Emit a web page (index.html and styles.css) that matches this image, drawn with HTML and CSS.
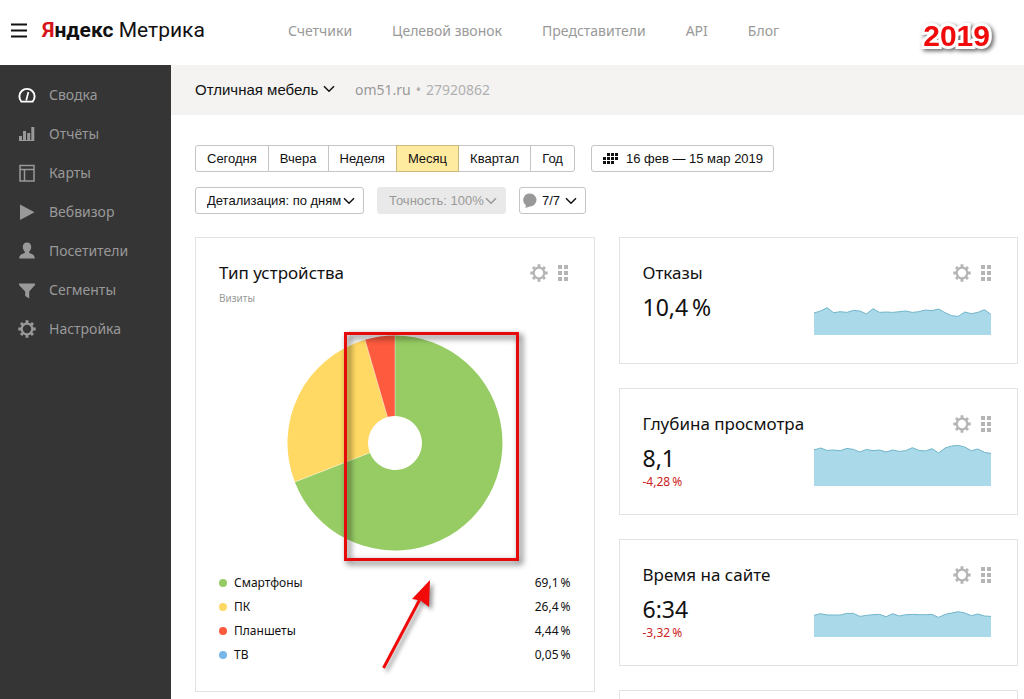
FILE: index.html
```html
<!DOCTYPE html>
<html lang="ru">
<head>
<meta charset="utf-8">
<title>Яндекс Метрика</title>
<link rel="stylesheet" href="styles.css">
</head>
<body>
<svg class="sprite" aria-hidden="true">
  <symbol id="gear" viewBox="0 0 18 18">
    <circle cx="9" cy="9" r="5.300" fill="none" stroke="currentColor" stroke-width="2.200"/>
    <path d="M9 .3v3.400M9 14.300v3.400M.3 9h3.400M14.300 9h3.400M3 3l2.200 2.200M12.800 12.800l2.200 2.200M3 15l2.200-2.200M12.800 5.200l2.200-2.200" stroke="currentColor" stroke-width="2.900" fill="none"/>
  </symbol>
  <symbol id="grip" viewBox="0 0 10 16">
    <path d="M0 0h4v4H0zM6 0h4v4H6zM0 6h4v4H0zM6 6h4v4H6zM0 12h4v4H0zM6 12h4v4H6z" fill="currentColor"/>
  </symbol>
  <symbol id="chevron" viewBox="0 0 12 8">
    <path d="M1 1.2l5 5 5-5" fill="none" stroke="currentColor" stroke-width="1.5"/>
  </symbol>
</svg>
<div class="page">
  <header class="header">
    <button class="burger" type="button" aria-label="Меню">
      <svg width="16" height="15" viewBox="0 0 16 15"><path d="M0 1.5h16M0 7.5h16M0 13.5h16" stroke="#111" stroke-width="1.8"/></svg>
    </button>
    <a class="logo" href="#"><b><span class="logo-ya">Я</span>ндекс</b> Метрика</a>
    <nav class="nav">
      <a href="#">Счетчики</a>
      <a href="#">Целевой звонок</a>
      <a href="#">Представители</a>
      <a href="#">API</a>
      <a href="#">Блог</a>
    </nav>
    <span class="year">2019</span>
  </header>
  <div class="layout">
    <nav class="sidebar">
      <a class="side-link active" href="#"><svg viewBox="0 0 18 18"><path d="M3.4 15.6A7.6 7.6 0 1 1 14.6 15.6Z" fill="none" stroke="currentColor" stroke-width="1.9" stroke-linejoin="round"/><path d="M8.2 14.5L10.4 6" stroke="currentColor" stroke-width="1.7"/></svg>Сводка</a>
      <a class="side-link" href="#"><svg viewBox="0 0 18 18"><path d="M1 11h3v5H1zM5 6h3v10H5zM9.200 8h3v8h-3zM13.300 2h3v14h-3zM1 15h15v1H1z" fill="currentColor"/></svg>Отчёты</a>
      <a class="side-link" href="#"><svg viewBox="0 0 18 18"><path d="M2 1.500h14v15.500H2zM2 5.500h14M6.500 5.500V17" fill="none" stroke="currentColor" stroke-width="1.500"/></svg>Карты</a>
      <a class="side-link" href="#"><svg viewBox="0 0 18 18"><path d="M2 1.500v15.500L16.500 9.200z" fill="currentColor"/></svg>Вебвизор</a>
      <a class="side-link" href="#"><svg viewBox="0 0 18 18"><path d="M9 .5c2.800 0 4.200 2 4.200 4.400 0 1.800-.8 3.600-2 4.600v1.600c2.400.8 5.600 1.400 5.600 5.400H1.200c0-4 3.200-4.600 5.600-5.400V9.500c-1.200-1-2-2.800-2-4.600C4.800 2.500 6.200.5 9 .5z" fill="currentColor"/></svg>Посетители</a>
      <a class="side-link" href="#"><svg viewBox="0 0 18 18"><path d="M1 2.500h16v1.500l-5.800 6.500V17.500l-4-2.500v-4.500L1 4z" fill="currentColor"/></svg>Сегменты</a>
      <a class="side-link" href="#"><svg viewBox="0 0 18 18"><use href="#gear"/></svg>Настройка</a>
    </nav>
    <main class="main">
      <div class="counter">
        <label class="picker picker-plain">
          <select aria-label="Счетчик"><option>Отличная мебель</option></select>
          <svg class="chevron"><use href="#chevron"/></svg>
        </label>
        <div class="counter-info"><a href="#">om51.ru</a><span>•</span><span>27920862</span></div>
      </div>
      <div class="filters">
        <div class="filter-row">
          <div class="period">
            <button type="button">Сегодня</button>
            <button type="button">Вчера</button>
            <button type="button">Неделя</button>
            <button type="button" class="selected">Месяц</button>
            <button type="button">Квартал</button>
            <button type="button">Год</button>
          </div>
          <button class="box-button dates" type="button">
            <svg width="15" height="11" viewBox="0 0 15 11"><path d="M4 0h3v3H4zM8 0h3v3H8zM12 0h3v3h-3zM0 4h3v3H0zM4 4h3v3H4zM8 4h3v3H8zM12 4h3v3h-3zM0 8h3v3H0zM4 8h3v3H4zM8 8h3v3H8z" fill="#111"/></svg>
            16 фев — 15 мар 2019
          </button>
        </div>
        <div class="filter-row">
          <label class="picker picker-box">
            <select aria-label="Детализация"><option>Детализация: по дням</option></select>
            <svg class="chevron"><use href="#chevron"/></svg>
          </label>
          <label class="picker picker-box picker-off">
            <select aria-label="Точность" disabled><option>Точность: 100%</option></select>
            <svg class="chevron"><use href="#chevron"/></svg>
          </label>
          <button class="box-button notes" type="button">
            <svg width="14" height="15" viewBox="0 0 14 15"><path d="M7 .5a6.500 6.500 0 1 1 0 13c-1.200 0-2.600 1.300-5 1.300.8-.8 1-1.600.6-2.800A6.500 6.500 0 0 1 7 .5z" fill="#999"/></svg>
            7/7
            <svg class="chevron"><use href="#chevron"/></svg>
          </button>
        </div>
      </div>
      <div class="widgets">
        <section class="card">
          <div class="card-head">
            <h2>Тип устройства</h2>
            <button type="button" aria-label="Настроить"><svg class="gear"><use href="#gear"/></svg></button>
            <button type="button" aria-label="Переместить"><svg class="grip"><use href="#grip"/></svg></button>
          </div>
          <p class="subtitle">Визиты</p>
          <div class="pie">
            <svg class="pie-chart" viewBox="-108 -108 216 216">
              <path d="M0-107.500A107.500 107.500 0 1 1-100.200 39L-25.200 9.800A27 27 0 1 0 0-27z" fill="#97cc64"/>
              <path d="M-100.200 39A107.500 107.500 0 0 1-30-103.200L-7.500-25.900A27 27 0 0 0-25.200 9.800z" fill="#ffd963"/>
              <path d="M-30-103.200A107.500 107.500 0 0 1 0-107.500V-27A27 27 0 0 0-7.500-25.900z" fill="#fd5a3e"/>
              <path d="M0-107.500V-27M-100.200 39L-25.200 9.800M-30-103.200L-7.500-25.900" stroke="#fff" stroke-opacity=".5" stroke-width=".8"/>
            </svg>
            <div class="marker"></div>
            <svg class="arrow" viewBox="0 0 56 96"><path d="M2.500 90L38.500 22" stroke="#f00a0a" stroke-width="3"/><path d="M49 2L48 29 39.500 22.500 31 21z" fill="#f00a0a"/></svg>
          </div>
          <table class="legend">
            <tr><th scope="row"><i class="dot green"></i>Смартфоны</th><td>69,1&thinsp;%</td></tr>
            <tr><th scope="row"><i class="dot yellow"></i>ПК</th><td>26,4&thinsp;%</td></tr>
            <tr><th scope="row"><i class="dot red"></i>Планшеты</th><td>4,44&thinsp;%</td></tr>
            <tr><th scope="row"><i class="dot blue"></i>ТВ</th><td>0,05&thinsp;%</td></tr>
          </table>
        </section>
        <div class="column">
          <section class="card stat">
            <div class="card-head">
              <h2>Отказы</h2>
              <button type="button" aria-label="Настроить"><svg class="gear"><use href="#gear"/></svg></button>
              <button type="button" aria-label="Переместить"><svg class="grip"><use href="#grip"/></svg></button>
            </div>
            <div class="stat-body">
              <div><p class="value">10,4&thinsp;%</p></div>
              <svg class="spark" viewBox="0 0 27 44" preserveAspectRatio="none">
                <path class="area" d="M0 44V22L1 20 2 16.700 3 21.700 4 20.700 5 21.400 6 19.400 7 20 8 23 9 17.700 10 21.400 11 21 12 21.400 13 20.700 14 20 15 21.400 16 20.700 17 19 18 19.700 19 18 20 21.700 21 24.700 22 25.400 23 21 24 22.700 25 21.400 26 18.700 27 23.400V44z"/>
                <polyline class="line" points="0,22 1,20 2,16.7 3,21.7 4,20.7 5,21.4 6,19.4 7,20 8,23 9,17.7 10,21.4 11,21 12,21.4 13,20.7 14,20 15,21.4 16,20.7 17,19 18,19.7 19,18 20,21.7 21,24.7 22,25.4 23,21 24,22.7 25,21.4 26,18.7 27,23.4"/>
              </svg>
            </div>
          </section>
          <section class="card stat">
            <div class="card-head">
              <h2>Глубина просмотра</h2>
              <button type="button" aria-label="Настроить"><svg class="gear"><use href="#gear"/></svg></button>
              <button type="button" aria-label="Переместить"><svg class="grip"><use href="#grip"/></svg></button>
            </div>
            <div class="stat-body">
              <div><p class="value">8,1</p><p class="delta">-4,28&thinsp;%</p></div>
              <svg class="spark" viewBox="0 0 27 44" preserveAspectRatio="none">
                <path class="area" d="M0 44V8L1 6 2 8.400 3 8 4 8.700 5 6.400 6 7.400 7 10 8 7.400 9 8.700 10 8 11 10 12 8 13 9.400 14 8.700 15 5.700 16 8.400 17 9 18 6.700 19 11 20 6 21 4 22 3.400 23 5 24 8.700 25 7 26 10.400 27 11.400V44z"/>
                <polyline class="line" points="0,8 1,6 2,8.4 3,8 4,8.7 5,6.4 6,7.4 7,10 8,7.4 9,8.7 10,8 11,10 12,8 13,9.4 14,8.7 15,5.7 16,8.4 17,9 18,6.7 19,11 20,6 21,4 22,3.4 23,5 24,8.7 25,7 26,10.4 27,11.4"/>
              </svg>
            </div>
          </section>
          <section class="card stat">
            <div class="card-head">
              <h2>Время на сайте</h2>
              <button type="button" aria-label="Настроить"><svg class="gear"><use href="#gear"/></svg></button>
              <button type="button" aria-label="Переместить"><svg class="grip"><use href="#grip"/></svg></button>
            </div>
            <div class="stat-body">
              <div><p class="value">6:34</p><p class="delta">-3,32&thinsp;%</p></div>
              <svg class="spark" viewBox="0 0 27 44" preserveAspectRatio="none">
                <path class="area" d="M0 44V22.400L1 20.700 2 22 3 22 4 22 5 20.400 6 20.400 7 23.400 8 22.400 9 21.700 10 21.400 11 23.700 12 20.700 13 23 14 21.700 15 21.400 16 21.700 17 21.700 18 21.400 19 24.400 20 21.400 21 20 22 18.700 23 20 24 22.700 25 21 26 23 27 23.400V44z"/>
                <polyline class="line" points="0,22.4 1,20.7 2,22 3,22 4,22 5,20.4 6,20.4 7,23.4 8,22.4 9,21.7 10,21.4 11,23.7 12,20.7 13,23 14,21.7 15,21.4 16,21.7 17,21.7 18,21.4 19,24.4 20,21.4 21,20 22,18.7 23,20 24,22.7 25,21 26,23 27,23.4"/>
              </svg>
            </div>
          </section>
          <section class="card stat"></section>
        </div>
      </div>
    </main>
  </div>
</div>
</body>
</html>
```

FILE: styles.css
```css
* { box-sizing: border-box; }

body {
  margin: 0;
  background: #fff;
  color: #111;
  font-family: "Noto Sans", "Open Sans", sans-serif;
  font-size: 15px;
}

h2, p { margin: 0; font-weight: 400; }
a { color: inherit; text-decoration: none; }
svg { display: block; flex: none; }
button, select { font: inherit; color: inherit; margin: 0; }
.sprite { position: absolute; width: 0; height: 0; }

.page {
  display: flex;
  flex-direction: column;
  height: 100vh;
  overflow: hidden;
}

/* Header */
.header {
  flex: none;
  display: flex;
  align-items: center;
  height: 65px;
  padding: 0 34px 5px 11px;
}
.burger { padding: 0; border: 0; background: none; }
.logo {
  flex: none;
  width: 232px;
  margin-left: 15px;
  font-family: Roboto, "Open Sans", sans-serif;
  font-size: 21px;
  line-height: 40px;
  white-space: nowrap;
}
.logo-ya { color: #d6151b; }
.nav {
  display: flex;
  gap: 40px;
  margin-left: 14px;
  color: #999;
  font-size: 14px;
  white-space: nowrap;
}
.year {
  margin-left: auto;
  padding-top: 12px;
  color: #f00a0a;
  font: bold 30px "Liberation Sans", Arial, sans-serif;
  -webkit-text-stroke: 6px #fff;
  paint-order: stroke fill;
  filter: drop-shadow(2px 2px 2px rgba(0, 0, 0, .6));
}

.layout { flex: 1; display: flex; min-height: 0; }

/* Sidebar */
.sidebar {
  flex: none;
  width: 171px;
  padding-top: 10px;
  background: #353535;
  color: #999;
}
.side-link {
  display: flex;
  align-items: center;
  gap: 13px;
  height: 39px;
  padding-left: 18px;
  font-size: 14px;
}
.side-link svg { width: 18px; height: 18px; }
.side-link.active svg { color: #fff; }

/* Counter bar */
.main { flex: 1; min-width: 0; overflow: hidden; }
.counter {
  display: flex;
  align-items: center;
  gap: 20px;
  height: 50px;
  padding: 0 24px 2px;
  background: #f4f3f2;
}
.counter-info { display: flex; gap: 5px; color: #b0b0b0; font-size: 14px; }
.counter-info a { color: #999; }

.picker { position: relative; display: flex; align-items: center; }
.picker select {
  appearance: none;
  border: 0;
  padding: 0;
  background: none;
  opacity: 1;
}
.chevron { width: 12px; height: 8px; }
.picker .chevron { position: absolute; right: 0; pointer-events: none; }
.picker-plain { font: 15px "Liberation Sans", Arial, sans-serif; }
.picker-plain select { padding-right: 16px; }

/* Filters */
.filters {
  display: flex;
  flex-direction: column;
  gap: 15px;
  padding: 30px 24px 23px;
  font: 13px "Liberation Sans", Arial, sans-serif;
}
.filter-row { display: flex; gap: 13px; }
.period { display: flex; margin-right: 3px; }
.period button {
  height: 27px;
  padding: 0 11px;
  border: 1px solid #c4c4c4;
  background: #fff;
}
.period button + button { margin-left: -1px; }
.period button:first-child { border-radius: 3px 0 0 3px; }
.period button:last-child { border-radius: 0 3px 3px 0; }
.period .selected { position: relative; background: #ffeba0; border-color: #c9b97c; }
.box-button {
  display: flex;
  align-items: center;
  height: 27px;
  border: 1px solid #c4c4c4;
  border-radius: 3px;
  background: #fff;
}
.dates { gap: 8px; padding: 0 10px 0 11px; }
.notes { gap: 5px; padding: 0 8px 0 3px; }
.picker-box {
  height: 27px;
  border: 1px solid #c4c4c4;
  border-radius: 3px;
}
.picker-box select { height: 25px; padding: 0 21px 0 11px; }
.picker-box .chevron { right: 8px; }
.picker-off { background: #e9e9e9; border-color: #e9e9e9; color: #999; }

/* Widgets */
.widgets {
  display: grid;
  grid-template-columns: 1fr 1fr;
  gap: 24px;
  align-items: start;
  padding: 0 6px 0 24px;
}
.column { display: grid; gap: 24px; }
.card {
  padding: 23px 23px 25px;
  border: 1px solid #e3e3e3;
}
.card-head {
  display: flex;
  align-items: center;
  gap: 10px;
  height: 24px;
  padding-right: 3px;
}
.card-head h2 { flex: 1; font-size: 17px; line-height: 24px; white-space: nowrap; }
.card-head button { padding: 0; border: 0; background: none; color: #b5b5b5; }
.gear { width: 18px; height: 18px; }
.grip { width: 10px; height: 16px; }
.subtitle { margin-top: 4px; color: #999; font-size: 10px; line-height: 18px; }

.pie { position: relative; width: 216px; margin: 28px auto 19px; }
.pie-chart { width: 100%; }
.marker {
  position: absolute;
  left: 57px;
  top: -3px;
  width: 175px;
  height: 229px;
  border: 3px solid #e60a0a;
  filter: drop-shadow(3px 3px 3px rgba(0, 0, 0, .7));
}
.arrow {
  position: absolute;
  left: 94px;
  top: 243px;
  width: 56px;
  height: 96px;
  overflow: visible;
  filter: drop-shadow(3px 3px 2px rgba(0, 0, 0, .4));
}

.legend { width: 100%; border-collapse: collapse; font-size: 12px; }
.legend th, .legend td { height: 24px; padding: 0; font-weight: 400; text-align: left; }
.legend td { text-align: right; }
.dot {
  display: inline-block;
  width: 8px;
  height: 8px;
  margin-right: 7px;
  border-radius: 50%;
}
.green { background: #97cc64; }
.yellow { background: #ffd963; }
.red { background: #fd5a3e; }
.blue { background: #77b6e7; }

.stat { min-height: 127px; padding-bottom: 22px; }
.stat-body {
  display: flex;
  justify-content: space-between;
  align-items: flex-start;
  padding-right: 3px;
}
.value { margin-top: 8px; font-size: 23px; line-height: 28px; }
.delta { margin-top: 1px; color: #c22; font-size: 12px; line-height: 18px; }
.spark { width: 177px; height: 44px; margin-top: 6px; }
.area { fill: #aadaea; }
.line { fill: none; stroke: #6fb5c9; stroke-width: 1; vector-effect: non-scaling-stroke; }
```
